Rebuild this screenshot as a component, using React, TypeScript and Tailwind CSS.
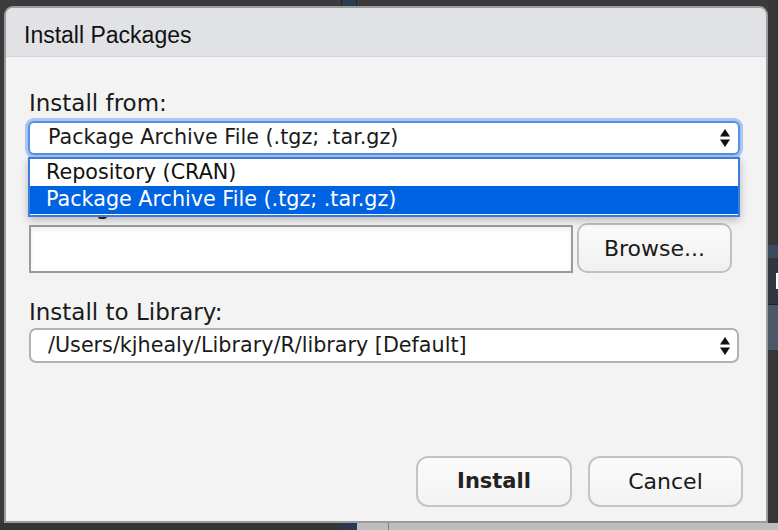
const Arrows = () => (
  <svg width="10" height="18" viewBox="0 0 10 18" className="shrink-0">
    <polygon points="0,7.5 5,0 10,7.5" fill="#111" />
    <polygon points="0,10.5 10,10.5 5,18" fill="#111" />
  </svg>
);

const Label = ({ children, className = "" }: { children: React.ReactNode; className?: string }) => (
  <div className={`h-[28px] text-[23px] leading-[28px] text-[#1a1a1a] ${className}`}>{children}</div>
);

export default function App() {
  return (
    <div className="relative h-[530px] w-[778px] overflow-hidden bg-[#3b3b3b] pl-[4px] pt-[6px] font-['DejaVu_Sans',sans-serif]">
      {/* app behind the dialog */}
      <div className="absolute left-[341px] top-0 h-[6px] w-[16px] border-x border-[#1d2733] bg-[#2b3c50]" />
      <div className="absolute right-0 top-0 flex h-full w-[10px] flex-col">
        <div className="h-[245px] bg-[#363636]" />
        <div className="h-[13px] bg-[#3a4b5e]" />
        <div className="flex h-[47px] items-center justify-end border-b border-[#222] bg-[#2f363f]">
          <div className="h-[16px] w-[2px] bg-white" />
        </div>
        <div className="h-[45px] bg-[#4a5868]" />
        <div className="flex-1 bg-[#363636]" />
      </div>
      <div className="absolute bottom-0 left-0 flex h-[7px] w-full">
        <div className="w-[340px] bg-[#353535]" />
        <div className="w-[17px] bg-[#2a3a4c]" />
        <div className="w-[31px] bg-[#bdbdbd]" />
        <div className="w-px bg-[#7a7a7a]" />
        <div className="flex-1 bg-[#bdbdbd]" />
      </div>

      {/* dialog */}
      <div className="relative flex h-[517px] w-[764px] flex-col overflow-hidden rounded-t-[9px] border-2 border-[#9c9c9c] bg-[#f2f3f2]">
        <div className="h-[49px] shrink-0 border-b border-[#d4d5d9] bg-[#e1e2e6] pl-[18px] pt-[13px] font-['Liberation_Sans',Arial,sans-serif] text-[23px] leading-[28px] text-[#111]">
          Install Packages
        </div>

        <div className="flex flex-1 flex-col pl-[23px] pr-[23px] pb-[14px] pt-[32px]">
          <Label>Install from:</Label>

          <div className="relative ml-[-1px] mr-[3px] mt-[4px]">
            <div className="flex h-[34px] items-center justify-between rounded-[6px] border-2 border-[#5590e6] bg-white pl-[18px] pr-[8px] text-[20.7px] text-[#1a1a1a] shadow-[0_0_0_3px_#a6c6f4]">
              <span>Package Archive File (.tgz; .tar.gz)</span>
              <Arrows />
            </div>
            <div className="absolute left-0 right-0 top-[36px] z-10 border-2 border-[#3f7bd8] bg-white pb-px text-[20.7px] shadow-[0_3px_8px_rgba(0,0,0,0.25)]">
              <div className="flex h-[27px] items-center pl-[16px] text-[#111]">Repository (CRAN)</div>
              <div className="flex h-[28px] items-center bg-[#0063e1] pl-[16px] text-white">
                Package Archive File (.tgz; .tar.gz)
              </div>
            </div>
          </div>

          <Label className="mt-[37px]">Package archive:</Label>

          <div className="mt-[3px] mr-[11px] flex h-[50px] items-end gap-[4px]">
            <div className="h-[48px] flex-1 border-2 border-[#9a9a9a] bg-white shadow-[inset_0_3px_5px_rgba(0,0,0,0.07)]" />
            <button className="flex h-[50px] w-[155px] items-center justify-center rounded-[10px] border-2 border-[#c0c0c0] bg-gradient-to-b from-[#fbfbfb] to-[#f0f0f0] text-[22px] text-[#1a1a1a]">
              Browse...
            </button>
          </div>

          <Label className="mt-[25px]">Install to Library:</Label>

          <div className="mr-[4px] mt-[2px] flex h-[35px] items-center justify-between rounded-[7px] border-2 border-[#b2b2b2] bg-white pl-[17px] pr-[7px] text-[20.7px] text-[#1a1a1a]">
            <span>/Users/kjhealy/Library/R/library [Default]</span>
            <Arrows />
          </div>

          <div className="mt-auto flex justify-end gap-[16px]">
            <button className="flex h-[51px] w-[156px] items-center justify-center rounded-[12px] border-2 border-[#c4c4c4] bg-gradient-to-b from-[#fbfbfb] to-[#f3f3f3] text-[21px] font-bold text-[#222]">
              Install
            </button>
            <button className="flex h-[51px] w-[155px] items-center justify-center rounded-[12px] border-2 border-[#c4c4c4] bg-gradient-to-b from-[#fbfbfb] to-[#f3f3f3] text-[22px] text-[#1a1a1a]">
              Cancel
            </button>
          </div>
        </div>
      </div>
    </div>
  );
}
